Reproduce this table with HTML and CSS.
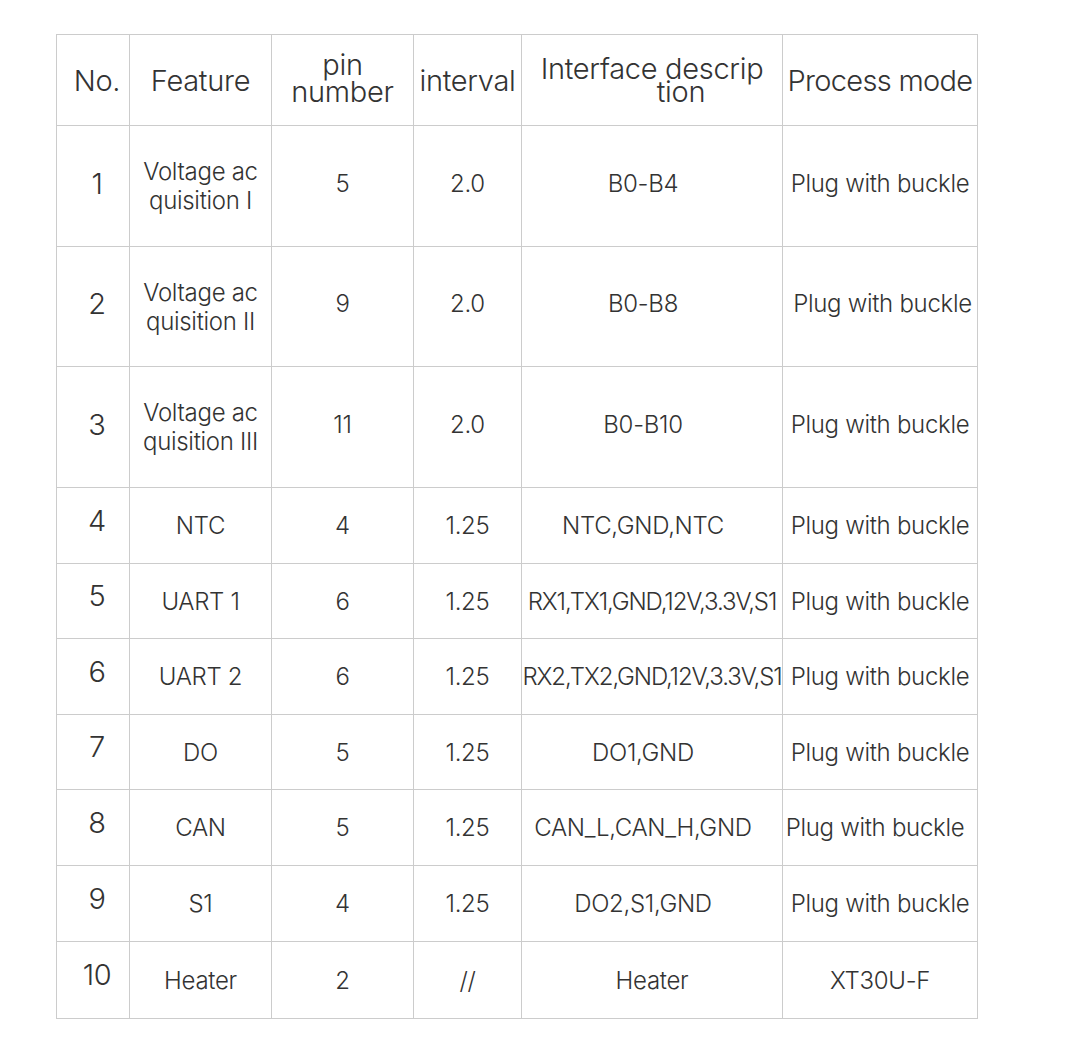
FILE: index.html
```html
<!DOCTYPE html>
<html>
<head>
<meta charset="utf-8">
<link rel="stylesheet" href="styles.css">
</head>
<body>
<table class="spec">
  <colgroup>
    <col class="c-no"><col class="c-feat"><col class="c-pin"><col class="c-int"><col class="c-desc"><col class="c-mode">
  </colgroup>
  <thead>
    <tr class="h91">
      <th class="num">No.</th>
      <th>Feature</th>
      <th class="pin">pin<br>number</th>
      <th>interval</th>
      <th class="tight">Interface descrip<br><span class="tail">tion</span></th>
      <th class="mode">Process mode</th>
    </tr>
  </thead>
  <tbody>
    <tr class="h121 up">
      <td class="num">1</td><td class="two">Voltage ac<br>quisition I</td><td>5</td><td>2.0</td><td class="desc">B0-B4</td><td>Plug with buckle</td>
    </tr>
    <tr class="h120 up">
      <td class="num">2</td><td class="two">Voltage ac<br>quisition II</td><td>9</td><td>2.0</td><td class="desc">B0-B8</td><td class="shift-r">Plug with buckle</td>
    </tr>
    <tr class="h121 up">
      <td class="num">3</td><td class="two">Voltage ac<br>quisition III</td><td>11</td><td>2.0</td><td class="desc">B0-B10</td><td>Plug with buckle</td>
    </tr>
    <tr class="h76">
      <td class="num">4</td><td>NTC</td><td>4</td><td>1.25</td><td class="desc">NTC,GND,NTC</td><td>Plug with buckle</td>
    </tr>
    <tr class="h75">
      <td class="num">5</td><td>UART 1</td><td>6</td><td>1.25</td><td class="long">RX1,TX1,GND,12V,3.3V,S1</td><td>Plug with buckle</td>
    </tr>
    <tr class="h76">
      <td class="num">6</td><td>UART 2</td><td>6</td><td>1.25</td><td class="long">RX2,TX2,GND,12V,3.3V,S1</td><td>Plug with buckle</td>
    </tr>
    <tr class="h75">
      <td class="num">7</td><td>DO</td><td>5</td><td>1.25</td><td class="desc">DO1,GND</td><td>Plug with buckle</td>
    </tr>
    <tr class="h76">
      <td class="num">8</td><td>CAN</td><td>5</td><td>1.25</td><td class="desc">CAN_L,CAN_H,GND</td><td class="shift-l">Plug with buckle</td>
    </tr>
    <tr class="h76">
      <td class="num">9</td><td>S1</td><td>4</td><td>1.25</td><td class="desc">DO2,S1,GND</td><td>Plug with buckle</td>
    </tr>
    <tr class="h77">
      <td class="num">10</td><td>Heater</td><td>2</td><td>//</td><td>Heater</td><td>XT30U-F</td>
    </tr>
  </tbody>
</table>
</body>
</html>
```
FILE: styles.css
```css
html, body {
  margin: 0;
  padding: 0;
  background: #ffffff;
}
body {
  padding: 34px 0 0 56px;
  font-family: "Inter", "Noto Sans", sans-serif;
  font-weight: 300;
  color: #333333;
}
.spec {
  border-collapse: collapse;
  table-layout: fixed;
  width: 921px;
}
.c-no { width: 73px; }
.c-feat { width: 142px; }
.c-pin { width: 142px; }
.c-int { width: 108px; }
.c-desc { width: 261px; }
.c-mode { width: 195px; }
.spec th, .spec td {
  border: 1px solid #cccccc;
  padding: 0;
  text-align: center;
  vertical-align: middle;
  white-space: nowrap;
  overflow: visible;
}
.spec th {
  font-weight: 300;
  font-size: 29px;
  line-height: 1;
  letter-spacing: -0.3px;
}
.spec th.num {
  padding-left: 8px;
}
.spec th.pin {
  line-height: 27px;
  padding-bottom: 4px;
}
.spec th.tight {
  line-height: 23px;
}
.spec th.mode {
  letter-spacing: -0.7px;
}
.spec th .tail {
  padding-left: 58px;
}
.spec td {
  font-size: 24px;
  line-height: 29px;
  letter-spacing: -0.3px;
}
.spec tr.up td {
  padding-bottom: 6px;
}
.spec tr.up td.two {
  padding-bottom: 0;
}
.spec td.num {
  font-size: 29px;
  padding-left: 8px;
  padding-bottom: 11px;
}
.spec td.desc {
  padding-right: 18px;
}
.spec td.long {
  letter-spacing: -1.1px;
}
.spec td.shift-r {
  padding-left: 5px;
}
.spec td.shift-l {
  padding-right: 10px;
}
.h91 { height: 91px; }
.h121 { height: 121px; }
.h120 { height: 120px; }
.h77 { height: 77px; }
.h76 { height: 76px; }
.h75 { height: 75px; }
```
